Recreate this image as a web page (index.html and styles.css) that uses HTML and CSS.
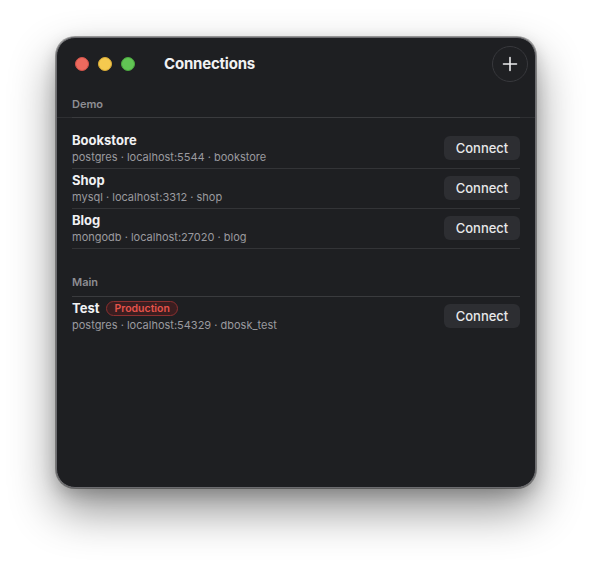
FILE: index.html
```html
<!DOCTYPE html>
<html lang="en">
<head>
<meta charset="utf-8">
<title>Connections</title>
<link rel="stylesheet" href="styles.css">
</head>
<body>
<div class="window">
  <div class="titlebar">
    <div class="lights">
      <span class="light red"></span>
      <span class="light yellow"></span>
      <span class="light green"></span>
    </div>
    <div class="title">Connections</div>
    <button class="add" aria-label="Add connection">
      <svg width="16" height="16" viewBox="0 0 16 16"><path d="M8 1.5v13M1.5 8h13" stroke="#ececee" stroke-width="1.6" stroke-linecap="round" fill="none"/></svg>
    </button>
  </div>
  <div class="topbar">
    <div class="section-head first">Demo</div>
  </div>
  <div class="list first-list">
    <div class="row">
      <div class="info">
        <div class="name">Bookstore</div>
        <div class="meta">postgres · localhost:5544 · bookstore</div>
      </div>
      <button class="connect">Connect</button>
    </div>
    <div class="row">
      <div class="info">
        <div class="name">Shop</div>
        <div class="meta">mysql · localhost:3312 · shop</div>
      </div>
      <button class="connect">Connect</button>
    </div>
    <div class="row">
      <div class="info">
        <div class="name">Blog</div>
        <div class="meta">mongodb · localhost:27020 · blog</div>
      </div>
      <button class="connect">Connect</button>
    </div>
  </div>
  <div class="section-head main">Main</div>
  <div class="list">
    <div class="row">
      <div class="info">
        <div class="name-line"><span class="name">Test</span><span class="badge">Production</span></div>
        <div class="meta">postgres · localhost:54329 · dbosk_test</div>
      </div>
      <button class="connect">Connect</button>
    </div>
  </div>
</div>
</body>
</html>
```

FILE: styles.css
```css
html, body {
  margin: 0;
  background: #ffffff;
}
html {
  height: 100%;
}
body {
  min-height: 100%;
  box-sizing: border-box;
  padding: 37px 0 0 56px;
  font-family: "Inter", "Noto Sans", sans-serif;
}
.window {
  width: 480px;
  height: 451px;
  box-sizing: border-box;
  background: #1e1f22;
  border: 1px solid #6c6c70;
  border-radius: 19px;
  box-shadow: 0 0 0 1px rgba(0,0,0,0.35), 0 22px 46px rgba(0,0,0,0.44), 0 6px 16px rgba(0,0,0,0.18);
  overflow: hidden;
  color: #ececee;
}
.titlebar {
  height: 52px;
  display: flex;
  align-items: center;
  padding: 0 7px 0 18px;
}
.lights {
  display: flex;
  gap: 9px;
}
.light {
  width: 14px;
  height: 14px;
  border-radius: 50%;
  box-sizing: border-box;
}
.red { background: #ed6a5e; border: 1px solid #d1534a; }
.yellow { background: #f5c94f; border: 1px solid #d9ab36; }
.green { background: #61c554; border: 1px solid #4ba83f; }
.title {
  margin-left: 29px;
  margin-top: -1px;
  font-size: 15px;
  font-weight: 700;
  color: #f1f1f3;
  flex: 1;
  letter-spacing: -0.2px;
}
.add {
  width: 36px;
  height: 36px;
  border-radius: 50%;
  border: 1px solid #38393d;
  background: #1f2023;
  display: flex;
  align-items: center;
  justify-content: center;
  padding: 0;
}
.topbar {
  border-bottom: 1px solid #2e2f32;
}
.section-head {
  margin: 0 15px;
  font-size: 11px;
  line-height: 14px;
  font-weight: 600;
  color: #8e8e93;
  border-bottom: 1px solid #3a3b3e;
  padding-bottom: 6px;
}
.section-head.first {
  padding-top: 7px;
  margin-bottom: -1px;
}
.section-head.main {
  margin-top: 26px;
  padding-bottom: 7px;
}
.list {
  margin: 0 15px;
}
.first-list {
  margin-top: 11px;
}
.row {
  display: flex;
  align-items: center;
  justify-content: space-between;
  padding: 4px 0 3px;
  border-bottom: 1px solid #333437;
}
.list:last-child .row:last-child {
  border-bottom: none;
}
.info {
  display: flex;
  flex-direction: column;
  gap: 3px;
}
.name {
  font-size: 13px;
  line-height: 14px;
  font-weight: 700;
  color: #f1f1f3;
}
.name-line {
  display: flex;
  align-items: center;
  gap: 7px;
  height: 14px;
}
.badge {
  font-size: 10.5px;
  line-height: 13px;
  font-weight: 600;
  color: #e5534b;
  background: #3a1e20;
  border: 1px solid #8c3030;
  border-radius: 8px;
  padding: 0 7px;
}
.meta {
  font-size: 11px;
  line-height: 15px;
  color: #9a9a9f;
}
.connect {
  width: 76px;
  height: 24px;
  border: none;
  border-radius: 6px;
  background: #2d2e32;
  color: #e8e8ea;
  font-family: "Inter", "Noto Sans", sans-serif;
  font-size: 13px;
  font-weight: 500;
  padding: 0;
  margin-top: -2px;
}
```
